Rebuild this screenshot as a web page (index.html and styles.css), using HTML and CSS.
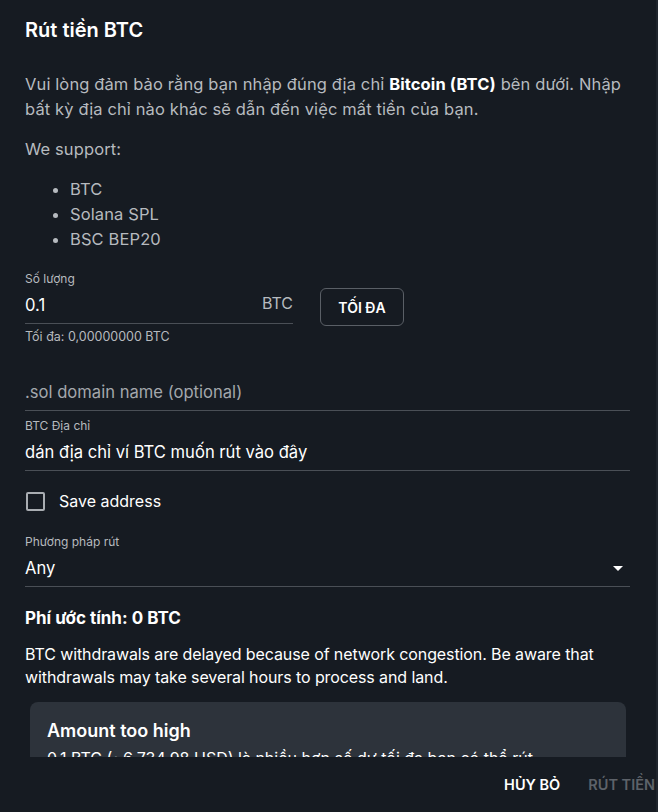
FILE: index.html
```html
<!DOCTYPE html>
<html lang="vi">
<head>
<meta charset="utf-8">
<title>Rút tiền BTC</title>
<link rel="stylesheet" href="styles.css">
</head>
<body>
<div class="dialog">
  <h2 class="dialog-title">Rút tiền BTC</h2>
  <div class="dialog-content">
    <p class="text">Vui lòng đảm bảo rằng bạn nhập đúng địa chỉ <strong>Bitcoin (BTC)</strong> bên dưới. Nhập bất kỳ địa chỉ nào khác sẽ dẫn đến việc mất tiền của bạn.</p>
    <p class="text">We support:</p>
    <ul class="list">
      <li>BTC</li>
      <li>Solana SPL</li>
      <li>BSC BEP20</li>
    </ul>
    <div class="amount-row">
      <div class="field amount-field">
        <label class="field-label">Số lượng</label>
        <div class="field-input">
          <span class="value">0.1</span>
          <span class="adorn">BTC</span>
        </div>
        <div class="helper">Tối đa: 0,00000000 BTC</div>
      </div>
      <button class="max-btn">TỐI ĐA</button>
    </div>
    <div class="field sol-field">
      <div class="field-input">
        <span class="placeholder">.sol domain name (optional)</span>
      </div>
    </div>
    <div class="field">
      <label class="field-label">BTC Địa chỉ</label>
      <div class="field-input">
        <span class="value">dán địa chỉ ví BTC muốn rút vào đây</span>
      </div>
    </div>
    <label class="checkbox-row">
      <span class="checkbox"></span>
      <span class="checkbox-text">Save address</span>
    </label>
    <div class="field">
      <label class="field-label">Phương pháp rút</label>
      <div class="field-input">
        <span class="value">Any</span>
        <svg class="caret" width="24" height="24" viewBox="0 0 24 24"><path d="M7 10l5 5 5-5z" fill="#ffffff"/></svg>
      </div>
    </div>
    <p class="fee">Phí ước tính: 0 BTC</p>
    <p class="text notice">BTC withdrawals are delayed because of network congestion. Be aware that withdrawals may take several hours to process and land.</p>
    <div class="alert">
      <div class="alert-title">Amount too high</div>
      <div class="alert-body">0.1 BTC (~6.734,98 USD) là nhiều hơn số dư tối đa bạn có thể rút.</div>
    </div>
  </div>
  <div class="dialog-actions">
    <button class="text-btn">HỦY BỎ</button>
    <button class="text-btn disabled">RÚT TIỀN</button>
  </div>
</div>
</body>
</html>
```
FILE: styles.css
```css
html, body {
  margin: 0;
  padding: 0;
  background: #161b22;
  height: 100%;
}
body {
  font-family: Inter, "Noto Sans", sans-serif;
  color: #ffffff;
  overflow: hidden;
}
.dialog {
  height: 812px;
  display: flex;
  flex-direction: column;
  background: #161b22;
  border-right: 2px solid #1f252d;
  box-sizing: border-box;
}
.dialog-title {
  margin: 0;
  padding: 17px 25px 0;
  height: 60px;
  box-sizing: border-box;
  font-size: 20px;
  font-weight: 600;
  line-height: 26px;
  flex: none;
}
.dialog-content {
  flex: 1;
  overflow: hidden;
  padding: 12px 26px 0 25px;
}
.text {
  margin: 0 0 15px;
  font-size: 16.5px;
  letter-spacing: 0.12px;
  line-height: 25px;
  color: #b6babf;
}
.text strong {
  color: #ffffff;
  font-weight: 700;
}
.list {
  margin: 0 0 19px;
  padding-left: 45px;
  font-size: 16.5px;
  letter-spacing: 0.12px;
  line-height: 25px;
  color: #b6babf;
}
.amount-row {
  display: flex;
  align-items: flex-start;
  gap: 27px;
}
.field {
  display: flex;
  flex-direction: column;
}
.amount-field {
  width: 268px;
}
.field-label {
  font-size: 12px;
  line-height: 16px;
  color: #b6babf;
}
.field-input {
  display: flex;
  align-items: center;
  justify-content: space-between;
  height: 36px;
  border-bottom: 1px solid #4a4f56;
  font-size: 16.6px;
}
.value {
  color: #ffffff;
}
.placeholder {
  color: #a3a7ac;
}
.adorn {
  color: #b6babf;
  font-size: 16px;
  position: relative;
  top: -2px;
}
.helper {
  margin-top: 5px;
  font-size: 12.5px;
  line-height: 16px;
  color: #b6babf;
}
.max-btn {
  margin-top: 17px;
  width: 84px;
  height: 38px;
  background: transparent;
  border: 1px solid #5a5f66;
  border-radius: 6px;
  color: #ffffff;
  font-family: inherit;
  font-size: 14px;
  font-weight: 600;
}
.sol-field {
  margin-top: 29px;
}
.sol-field + .field {
  margin-top: 7px;
}
.checkbox-row {
  display: flex;
  align-items: center;
  gap: 14px;
  margin-top: 18px;
  height: 24px;
}
.checkbox {
  width: 15px;
  height: 15px;
  border: 2px solid #a9adb2;
  border-radius: 2px;
  margin-left: 1px;
}
.checkbox-text {
  font-size: 16px;
  color: #ffffff;
}
.checkbox-row + .field {
  margin-top: 21px;
}
.fee {
  margin: 20px 0 0;
  font-size: 17px;
  font-weight: 700;
  line-height: 22px;
}
.notice {
  margin-top: 14px;
  margin-bottom: 13px;
  font-size: 16px;
  letter-spacing: -0.1px;
  line-height: 23px;
  color: #ffffff;
}
.alert {
  margin: 0 4px 0 5px;
  background: #2d333b;
  border-radius: 8px;
  padding: 18px 17px;
}
.alert-title {
  font-size: 18px;
  font-weight: 600;
  line-height: 22px;
}
.alert-body {
  margin-top: 4px;
  font-size: 16px;
  line-height: 24px;
}
.dialog-actions {
  flex: none;
  height: 55px;
  display: flex;
  justify-content: flex-end;
  align-items: center;
  gap: 28px;
  padding: 0 1px 0 0;
}
.text-btn {
  background: transparent;
  border: none;
  padding: 6px 0;
  font-family: inherit;
  font-size: 14.5px;
  font-weight: 600;
  color: #ffffff;
}
.text-btn.disabled {
  color: #5d6269;
}
```
